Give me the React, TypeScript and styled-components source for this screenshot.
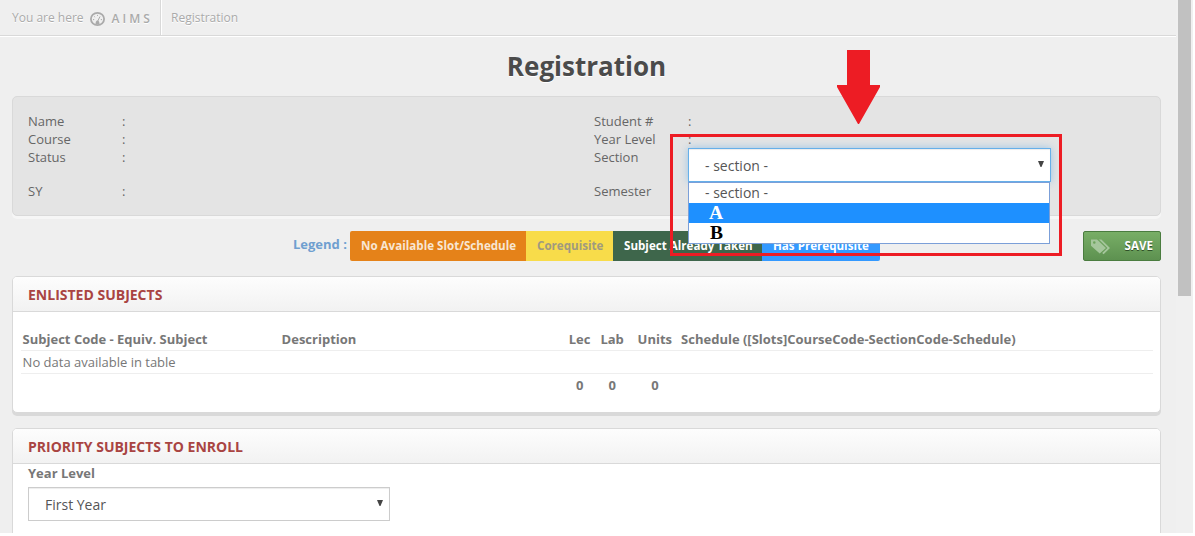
import React from "react";
import styled, { createGlobalStyle } from "styled-components";

const Global = createGlobalStyle`
  *, *::before, *::after { box-sizing: border-box; }
  html, body { margin: 0; padding: 0; height: 100%; overflow: hidden; background: #fff; }
  body { font-family: "Open Sans", "Liberation Sans", sans-serif; font-size: 13px; line-height: 18px; color: #666; }
`;

const Screen = styled.div`
  display: flex;
  width: 1193px;
  height: 533px;
  background: #efefef;
  overflow: hidden;
`;

const Page = styled.main`
  width: 1176px;
  flex: none;
`;

const ScrollTrack = styled.aside`
  flex: 1;
  background: #f0f0f0;
  padding-left: 2px;
`;

const ScrollThumb = styled.div`
  width: 13px;
  height: 296px;
  background: #c1c1c1;
`;

const Breadcrumb = styled.nav`
  display: flex;
  height: 36px;
  border-bottom: 1px solid #d9d9d9;
  box-shadow: 0 1px 0 #fff;
  color: #aaa;
  font-size: 12px;
  text-shadow: 0 1px 0 #fff;
`;

const CrumbHome = styled.div`
  display: flex;
  align-items: center;
  width: 161px;
  padding-left: 12px;
  border-right: 1px solid #d9d9d9;
  box-shadow: 1px 0 0 #fff;
  white-space: nowrap;

  svg { margin: 3px 7px 0 6px; }
`;

const AppName = styled.span`
  font-size: 12px;
  font-weight: 600;
  letter-spacing: 3px;
  margin-top: 2px;
`;

const Crumb = styled.div`
  display: flex;
  align-items: center;
  padding-left: 10px;
`;

const Title = styled.h1`
  margin: 0;
  height: 60px;
  padding-right: 3px;
  font-size: 26px;
  line-height: 60px;
  font-weight: 700;
  text-align: center;
  color: #4b4b4b;
  text-shadow: 0 1px 0 #fff;
`;

const StudentInfo = styled.section`
  display: flex;
  width: 1149px;
  height: 120px;
  margin-left: 12px;
  padding: 15px 15px 0;
  background: #e4e4e4;
  border: 1px solid #d9d9d9;
  border-radius: 5px;
  box-shadow: 0 3px 0 #f6f6f6;
`;

const InfoColumn = styled.div`
  flex: none;
  width: 566px;

  & + & { width: 551px; }
`;

const InfoRow = styled.div<{ $tall?: boolean }>`
  display: flex;
  height: ${(p) => (p.$tall ? 34 : 18)}px;
`;

const InfoLabel = styled.span`
  width: 94px;
`;

const InfoValue = styled.div`
  position: relative;
  flex: 1;
`;

const SelectBox = styled.div<{ $focused?: boolean }>`
  display: flex;
  align-items: center;
  justify-content: space-between;
  width: ${(p) => (p.$focused ? 363 : 362)}px;
  height: 34px;
  padding: 1px 6px 0 16px;
  background: #fff;
  border: 1px solid ${(p) => (p.$focused ? "#66afe9" : "#ccc")};
  box-shadow: inset 0 1px 1px rgba(0, 0, 0, 0.075)${(p) => (p.$focused ? ", 0 0 8px rgba(102, 175, 233, 0.6)" : "")};
  color: #555;
  font-size: 14px;
`;

const Caret = styled.span`
  width: 6px;
  height: 6px;
  margin-top: -3px;
  background: #444;
  clip-path: polygon(0 0, 100% 0, 58% 100%, 42% 100%);
`;

const Dropdown = styled.div`
  position: absolute;
  z-index: 2;
  top: 0;
  left: 0;
`;

const OptionList = styled.div`
  width: 362px;
  height: 62px;
  background: #fff;
  border: 1px solid #7b9fd8;
`;

const Option = styled.div<{ $letter?: boolean; $active?: boolean; $indent?: number }>`
  height: 20px;
  padding-left: ${(p) => p.$indent ?? 16}px;
  line-height: ${(p) => (p.$letter ? 20 : 19)}px;
  font-size: ${(p) => (p.$letter ? 19.5 : 14)}px;
  font-family: ${(p) => (p.$letter ? '"Liberation Serif", serif' : "inherit")};
  font-weight: ${(p) => (p.$letter ? 700 : 400)};
  background: ${(p) => (p.$active ? "#1e90ff" : "#fff")};
  color: ${(p) => (p.$active ? "#fff" : p.$letter ? "#000" : "#555")};
`;

const LegendBar = styled.section`
  display: flex;
  width: 1149px;
  height: 30px;
  margin: 15px 0 15px 12px;
`;

const LegendTitle = styled.strong`
  width: 57px;
  margin-left: 281px;
  padding-top: 4px;
  color: #6f9fd0;
  white-space: nowrap;
`;

const Tag = styled.span<{ $bg: string; $fg?: string; $width: number; $end?: "left" | "right" }>`
  width: ${(p) => p.$width}px;
  height: 30px;
  padding-left: 11px;
  line-height: 30px;
  font-size: 11.6px;
  font-weight: 700;
  white-space: nowrap;
  background: ${(p) => p.$bg};
  color: ${(p) => p.$fg ?? "#fff"};
  border-radius: ${(p) => (p.$end === "left" ? "2px 0 0 2px" : p.$end === "right" ? "0 2px 2px 0" : "0")};
`;

const SaveButton = styled.button`
  display: flex;
  align-items: center;
  justify-content: space-between;
  width: 78px;
  height: 30px;
  margin-left: auto;
  padding: 0 7px 1px;
  border: 1px solid #4a7c3f;
  border-radius: 2px;
  background: linear-gradient(#78ae66, #5d9150);
  color: #fff;
  font: 700 11.6px "Open Sans", sans-serif;
  text-shadow: 0 1px 0 #2f5128;

  svg { margin-top: 2px; }
`;

const Card = styled.section<{ $height: number }>`
  width: 1149px;
  height: ${(p) => p.$height}px;
  margin: 0 0 15px 12px;
  background: #fff;
  border: 1px solid #d9d9d9;
  border-radius: 5px;
  box-shadow: 0 3px 0 #d9d9d9;
  overflow: hidden;
`;

const CardTitle = styled.h2`
  margin: 0;
  height: 35px;
  padding-left: 15px;
  line-height: 36px;
  font-size: 14px;
  font-weight: 700;
  color: #a94442;
  background: linear-gradient(#fdfdfd, #f2f2f2);
  border-bottom: 1px solid #d9d9d9;
`;

const Table = styled.div`
  width: 1132px;
  margin: 16px 0 0 8px;
  color: #777;
`;

const TableRow = styled.div<{ $bold?: boolean; $last?: boolean }>`
  display: grid;
  grid-template-columns: 259px 282px 32px 33px 52.5px 1fr;
  height: 23px;
  line-height: 23px;
  padding-left: 1.6px;
  font-weight: ${(p) => (p.$bold ? 700 : 400)};
  border-bottom: 1px solid ${(p) => (p.$last ? "transparent" : "#eee")};
  white-space: nowrap;
`;

const Cell = styled.span<{ $center?: boolean; $start?: number }>`
  text-align: ${(p) => (p.$center ? "center" : "left")};
  grid-column-start: ${(p) => p.$start ?? "auto"};
`;

const Field = styled.div`
  padding: 0 15px;
  color: #777;
  font-weight: 700;

  ${SelectBox} { margin-top: 5px; font-weight: 400; }
`;

const Annotation = styled.div`
  position: absolute;
  z-index: 3;
  left: 670px;
  top: 50px;
  width: 392px;
  pointer-events: none;

  svg { display: block; margin-left: 167px; }
`;

const Highlight = styled.div`
  height: 122px;
  margin-top: 9px;
  border: 3px solid #ed1c24;
`;

const GaugeIcon = () => (
  <svg width="15" height="14" viewBox="0 0 15 14" fill="none">
    <ellipse cx="7.5" cy="7" rx="6.6" ry="6.1" stroke="#aaa" strokeWidth="1.8" />
    <path d="M3 7.6h1.2M4.3 4.5l.8.7M7.5 2.9v1M10.8 7.6h1.2M7.5 9.5l2.5-5" stroke="#aaa" strokeWidth="1" />
    <path d="M5.4 12.5Q5.6 8.6 7.5 8.6T9.6 12.5Z" fill="#aaa" />
  </svg>
);

const TagsIcon = () => (
  <svg width="20" height="16" viewBox="0 0 20 16" fill="#a5c69c">
    <path fillRule="evenodd" d="M0 .5H6L15 9L8.7 14.5L0 6.7ZM3.3 2.2A1.3 1.3 0 1 0 3.3 4.8A1.3 1.3 0 1 0 3.3 2.2Z" />
    <path d="M8 .5H10.4L19 9L12.6 15.3L11.2 14.1L16.4 9Z" />
  </svg>
);

const ArrowDown = () => (
  <svg width="43" height="75" viewBox="0 0 43 75" fill="#ed1c24">
    <path d="M10 0H33V35H43V37L22 74H21L0 37V35H10Z" />
  </svg>
);

const Info = ({ label, tall, colon = true }: { label: string; tall?: boolean; colon?: boolean }) => (
  <InfoRow $tall={tall}>
    <InfoLabel>{label}</InfoLabel>
    {colon && <span>:</span>}
  </InfoRow>
);

export default function App() {
  return (
    <>
      <Global />
      <Screen>
        <Page>
          <Breadcrumb>
            <CrumbHome>
              You are here <GaugeIcon /> <AppName>AIMS</AppName>
            </CrumbHome>
            <Crumb>Registration</Crumb>
          </Breadcrumb>
          <Title>Registration</Title>
          <StudentInfo>
            <InfoColumn>
              <Info label="Name" />
              <Info label="Course" />
              <Info label="Status" tall />
              <Info label="SY" />
            </InfoColumn>
            <InfoColumn>
              <Info label="Student #" />
              <Info label="Year Level" />
              <InfoRow $tall>
                <InfoLabel>Section</InfoLabel>
                <InfoValue>
                  <Dropdown>
                    <SelectBox $focused>
                      - section -
                      <Caret />
                    </SelectBox>
                    <OptionList>
                      <Option>- section -</Option>
                      <Option $letter $active $indent={20}>A</Option>
                      <Option $letter $indent={21}>B</Option>
                    </OptionList>
                  </Dropdown>
                </InfoValue>
              </InfoRow>
              <Info label="Semester" colon={false} />
            </InfoColumn>
          </StudentInfo>
          <LegendBar>
            <LegendTitle>Legend :</LegendTitle>
            <Tag $bg="#e58219" $fg="#f8e6d3" $width={176} $end="left">No Available Slot/Schedule</Tag>
            <Tag $bg="#f8dc4a" $fg="#a09a80" $width={87}>Corequisite</Tag>
            <Tag $bg="#3e664b" $width={149}>Subject Already Taken</Tag>
            <Tag $bg="#3399ff" $width={118} $end="right">Has Prerequisite</Tag>
            <SaveButton>
              <TagsIcon />
              SAVE
            </SaveButton>
          </LegendBar>
          <Card $height={137}>
            <CardTitle>ENLISTED SUBJECTS</CardTitle>
            <Table>
              <TableRow $bold>
                <Cell>Subject Code - Equiv. Subject</Cell>
                <Cell>Description</Cell>
                <Cell $center>Lec</Cell>
                <Cell $center>Lab</Cell>
                <Cell $center>Units</Cell>
                <Cell>Schedule ([Slots]CourseCode-SectionCode-Schedule)</Cell>
              </TableRow>
              <TableRow>
                <Cell>No data available in table</Cell>
              </TableRow>
              <TableRow $bold $last>
                <Cell $center $start={3}>0</Cell>
                <Cell $center>0</Cell>
                <Cell $center>0</Cell>
              </TableRow>
            </Table>
          </Card>
          <Card $height={160}>
            <CardTitle>PRIORITY SUBJECTS TO ENROLL</CardTitle>
            <Field>
              Year Level
              <SelectBox>
                First Year
                <Caret />
              </SelectBox>
            </Field>
          </Card>
        </Page>
        <ScrollTrack>
          <ScrollThumb />
        </ScrollTrack>
      </Screen>
      <Annotation>
        <ArrowDown />
        <Highlight />
      </Annotation>
    </>
  );
}
